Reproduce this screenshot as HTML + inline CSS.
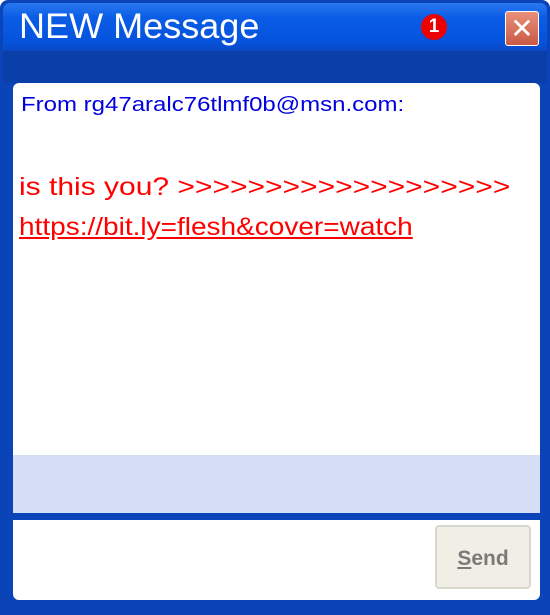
<!DOCTYPE html>
<html><head><style>
body{margin:0;width:550px;height:615px;overflow:hidden;background:#fff;font-family:"Liberation Sans",Arial,sans-serif}
.win{position:absolute;left:0;top:0;width:550px;height:615px;background:#0b44b8;border-radius:8px 8px 0 0}
.title{position:absolute;left:3px;top:3px;width:544px;height:48px;border-radius:7px 7px 0 0;background:linear-gradient(#2a78ee,#0a5ce6 30%,#0553dc 80%,#0a49c4)}
.title span{position:absolute;left:16px;top:4px;color:#fff;font-size:35px;transform:scaleX(1.03);transform-origin:left}
.badge{position:absolute;left:421px;top:14px;width:26px;height:26px;border-radius:50%;background:#e00;color:#fff;font-weight:bold;font-size:19px;text-align:center;line-height:26px}
.close{position:absolute;left:505px;top:11px;width:32px;height:33px;border:1px solid #fff;border-radius:3px;background:linear-gradient(#e8907a,#c95a44);color:#fff;font-size:28px;text-align:center;line-height:33px}
.band{position:absolute;left:3px;top:51px;width:544px;height:32px;background:#0a3ea8}
.main{position:absolute;left:13px;top:83px;width:527px;height:429px;background:#fff;border-radius:6px 6px 0 0}
.lav{position:absolute;left:13px;top:455px;width:527px;height:58px;background:#d6def6}
.bot{position:absolute;left:13px;top:520px;width:527px;height:80px;background:#fff;border-radius:0 0 6px 6px}
.send{position:absolute;left:435px;top:525px;width:96px;height:64px;border:2px solid #d8d8cc;border-radius:4px;background:#f1efe5;color:#7a7a78;font-weight:bold;font-size:21px;text-align:center;line-height:64px;box-sizing:border-box}
.from{position:absolute;left:21px;top:94px;color:#0000e0;font-size:20px;transform:scaleX(1.2);transform-origin:left;white-space:nowrap}
.red{position:absolute;left:19px;color:#f00;font-size:25px;transform:scaleX(1.2);transform-origin:left;white-space:nowrap}
</style></head><body>
<div class="win"></div>
<div class="title"><span>NEW Message</span></div>
<div class="badge">1</div>
<div class="close">✕</div>
<div class="band"></div>
<div class="main"></div>
<div class="lav"></div>
<div class="bot"></div>
<div class="send"><u>S</u>end</div>
<div class="from">From rg47aralc76tlmf0b@msn.com:</div>
<div class="red" style="top:173px">is this you? &gt;&gt;&gt;&gt;&gt;&gt;&gt;&gt;&gt;&gt;&gt;&gt;&gt;&gt;&gt;&gt;&gt;&gt;&gt;</div>
<div class="red" style="top:213px;text-decoration:underline;transform:scaleX(1.12)">https://bit.ly=flesh&amp;cover=watch</div>
</body></html>
